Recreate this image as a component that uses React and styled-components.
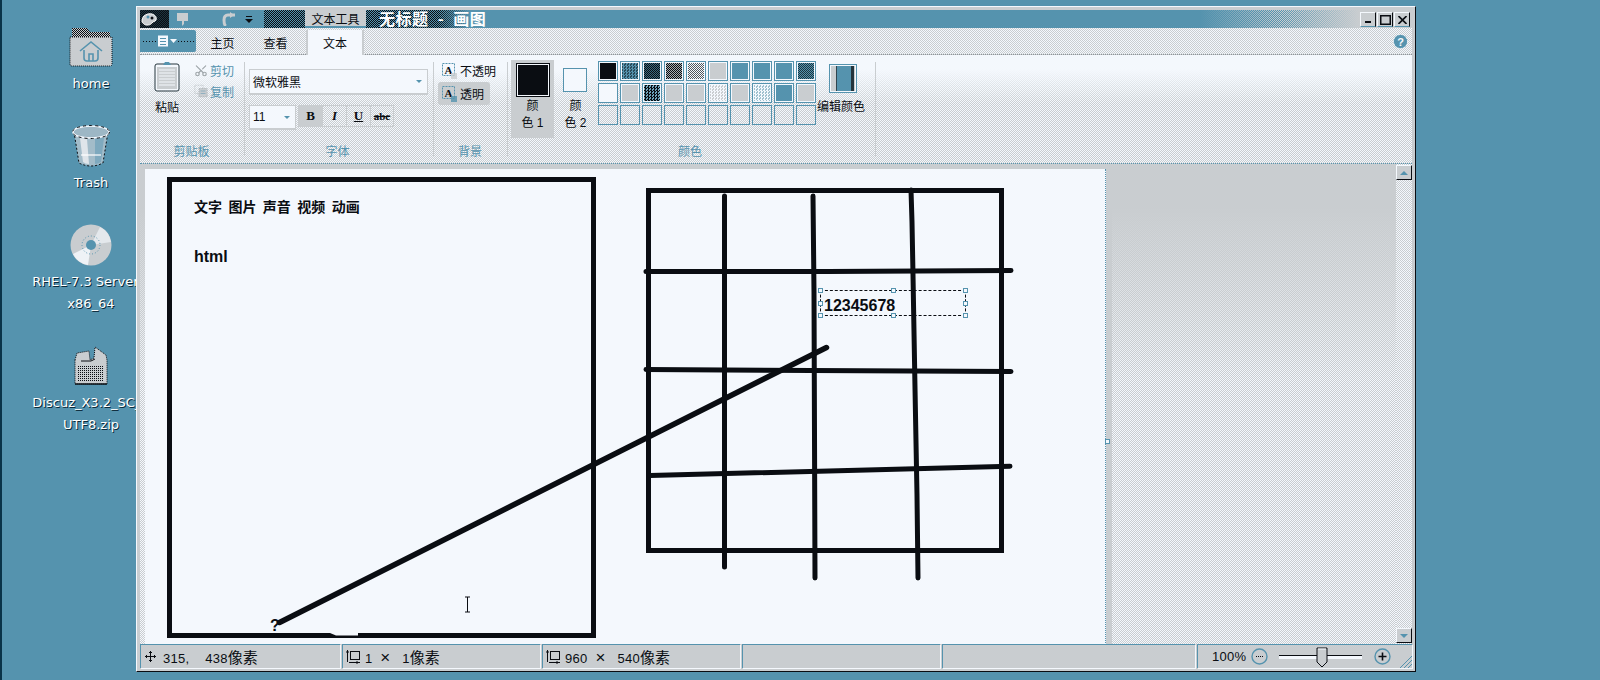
import React from "react";
import styled, { createGlobalStyle } from "styled-components";
import { Scissors } from "lucide-react";

const BLUE = "#5593ae";
const GRAY = "#c9cdd0";
const PAPER = "#f4f8fd";
const INK = "#0a0d12";

const checker = (a, b, size = 2) =>
  `repeating-conic-gradient(${a} 0 25%, ${b} 0 50%) 0 0 / ${size}px ${size}px`;

const GlobalStyle = createGlobalStyle`
  html, body { margin: 0; padding: 0; background: ${BLUE}; overflow: hidden; }
  body { font-family: "Liberation Sans", "Noto Sans CJK SC", sans-serif; font-size: 12px; color: ${INK}; }
  * { box-sizing: border-box; }
`;

const Screen = styled.div`
  display: flex;
  align-items: flex-start;
  height: 680px;
  border-left: 2px solid #0a3348;
  background: ${BLUE};
`;

/* ---------- desktop ---------- */

const Desktop = styled.div`
  flex: none;
  width: 134px;
  padding: 25px 0 0 32px;
  display: flex;
  flex-direction: column;
  gap: 29px;
`;

const DesktopItem = styled.div`
  width: 114px;
  display: flex;
  flex-direction: column;
  align-items: center;
`;

const DesktopIcon = styled.div`
  height: 44px;
  margin-bottom: 4px;
  display: flex;
  align-items: center;
  justify-content: center;
`;

const DesktopLabel = styled.div`
  font-family: "DejaVu Sans", sans-serif;
  font-size: 13px;
  line-height: 22px;
  color: #fff;
  white-space: pre;
  text-shadow: 1px 1px 0 #0a2a3a;
`;

const FolderIcon = () => (
  <svg width="44" height="40" viewBox="0 0 44 40">
    <defs>
      <pattern id="tabDots" width="2" height="2" patternUnits="userSpaceOnUse">
        <rect width="2" height="2" fill={GRAY} />
        <rect width="1" height="1" fill={INK} />
        <rect x="1" y="1" width="1" height="1" fill={INK} />
      </pattern>
    </defs>
    <path d="M3 1h15l3 4h20v6H3z" fill="url(#tabDots)" />
    <path d="M1 10h42v27q0 2-2 2H3q-2 0-2-2z" fill={GRAY} stroke={INK} strokeWidth="1" strokeDasharray="1 1" />
    <path d="M11 24 L22 15 L33 24 M15 23v8q0 3 3 3h8q3 0 3-3v-8 M20 34v-7h4v7" fill="none" stroke={BLUE} strokeWidth="1.6" />
  </svg>
);

const TrashIcon = () => (
  <svg width="40" height="44" viewBox="0 0 40 44">
    <path d="M3 8 L8 39 Q20 45 32 39 L37 8z" fill="#a3bcc9" stroke={INK} strokeWidth="1" strokeDasharray="2 2" />
    <path d="M9 14 L12 38 Q14 40 18 40 L16 15z" fill="#dfe5ea" />
    <path d="M24 14h9l-3 24q-3 2-6 2z" fill="#7ea9be" />
    <ellipse cx="20" cy="8" rx="18" ry="6" fill="#9db7c5" stroke="#f4f8fd" strokeWidth="1.6" />
    <ellipse cx="20" cy="8" rx="18.5" ry="6.5" fill="none" stroke={INK} strokeWidth="1" strokeDasharray="3 3" />
    <rect x="10" y="30" width="20" height="2" fill="#fff" opacity="0.6" />
  </svg>
);

const DiscIcon = () => (
  <svg width="42" height="42" viewBox="0 0 42 42">
    <circle cx="21" cy="21" r="20.5" fill={GRAY} />
    <path d="M21 21 L3 30 A20 20 0 0 0 18 41z" fill="#eef2f6" />
    <path d="M21 21 L30 3 A20 20 0 0 1 41 18z" fill="#e4e8ec" />
    <circle cx="21" cy="21" r="9" fill="none" stroke={BLUE} strokeWidth="1" strokeDasharray="1 2" />
    <circle cx="21" cy="21" r="5" fill={BLUE} />
  </svg>
);

const ZipIcon = () => (
  <svg width="34" height="40" viewBox="0 0 34 40">
    <defs>
      <pattern id="zipDots" width="2" height="2" patternUnits="userSpaceOnUse">
        <rect width="2" height="2" fill={GRAY} />
        <rect width="1" height="1" fill={INK} />
      </pattern>
    </defs>
    <path d="M1 14 L3 7 L15 5 L16 14 L20 12 L21 1 L32 9 L33 14 V38 H1z" fill={GRAY} stroke={INK} strokeWidth="1" strokeDasharray="1 1" />
    <path d="M1 38 H33" stroke={INK} strokeWidth="1.4" />
    <rect x="4" y="19" width="26" height="17" fill="url(#zipDots)" />
    <path d="M7 15 h10 l4 -2" stroke={INK} fill="none" />
  </svg>
);

/* ---------- window frame ---------- */

const Window = styled.div`
  position: relative;
  z-index: 1;
  flex: none;
  width: 1280px;
  margin-top: 6px;
  padding: 3px;
  background: ${GRAY};
  border-top: 1px solid ${PAPER};
  border-left: 1px solid ${PAPER};
  border-right: 1px solid ${INK};
  border-bottom: 1px solid ${INK};
  display: flex;
  flex-direction: column;
`;

const TitleBar = styled.div`
  height: 18px;
  display: flex;
  align-items: stretch;
  background: ${BLUE};
`;

const AppIcon = styled.div`
  width: 29px;
  display: flex;
  align-items: center;
  justify-content: flex-start;
  background: ${checker(INK, "#1d3540")};
`;

const QuickAccess = styled.div`
  width: 95px;
  display: flex;
  align-items: center;
  padding-left: 8px;
  gap: 34px;
  background: ${BLUE};
  border-radius: 0 9px 9px 0;
`;

const TitleDither = styled.div`
  width: ${(p) => p.$w}px;
  background: ${checker(INK, BLUE)};
`;

const ContextTab = styled.div`
  width: 61px;
  display: flex;
  align-items: center;
  justify-content: center;
  font-size: 12px;
  background: ${GRAY};
  border-bottom: 2px solid ${BLUE};
`;

const WindowTitle = styled.div`
  width: 126px;
  font-family: "Noto Sans CJK SC", sans-serif;
  font-size: 16px;
  font-weight: 700;
  line-height: 17px;
  letter-spacing: 0.5px;
  word-spacing: 5px;
  color: #fff;
  white-space: nowrap;
  background: linear-gradient(90deg, rgba(85, 147, 174, 0) 0 60px, ${BLUE} 90px), ${checker(INK, BLUE)};
`;

const TitleFade = styled.div`
  flex: 1;
  margin-left: 695px;
  background: linear-gradient(90deg, ${BLUE}, rgba(85, 147, 174, 0) 50%),
    linear-gradient(90deg, rgba(201, 205, 208, 0) 50%, ${GRAY}), ${checker(BLUE, GRAY)};
`;

const WindowButtons = styled.div`
  width: 52px;
  display: flex;
  align-items: flex-start;
  gap: 1px;
  padding-top: 2px;
  background: ${GRAY};
`;

const WindowButton = styled.div`
  width: 16px;
  height: 15px;
  display: flex;
  align-items: center;
  justify-content: center;
  background: ${GRAY};
  border-top: 1px solid ${PAPER};
  border-left: 1px solid ${PAPER};
  border-right: 1px solid ${INK};
  border-bottom: 1px solid ${BLUE};
`;

const TabRow = styled.div`
  height: 27px;
  padding-top: 2px;
  display: flex;
  align-items: flex-start;
  background: ${checker(PAPER, GRAY)};
  border-bottom: 1px dotted #8d9499;
`;

const FileButton = styled.div`
  width: 56px;
  height: 22px;
  display: flex;
  align-items: center;
  justify-content: center;
  background: ${BLUE};
  border-radius: 0 2px 2px 0;
`;

const Tab = styled.div`
  width: ${(p) => (p.$active ? 54 : 53)}px;
  height: ${(p) => (p.$active ? 25 : 24)}px;
  margin-left: ${(p) => (p.$active ? 6 : 0)}px;
  display: flex;
  align-items: center;
  justify-content: center;
  font-size: 12px;
  background: ${(p) => (p.$active ? PAPER : "transparent")};
  box-shadow: ${(p) => (p.$active ? `-2px 0 0 ${GRAY}, 2px 0 0 ${GRAY}` : "none")};
`;

const HelpSlot = styled.div`
  margin-left: auto;
  margin-right: 4px;
  padding-top: 4px;
  display: flex;
`;

/* ---------- ribbon ---------- */

const Ribbon = styled.div`
  height: 108px;
  display: flex;
  background: linear-gradient(${PAPER} 0 14px, rgba(244, 248, 253, 0) 48px), ${checker(PAPER, GRAY)};
`;

const Group = styled.div`
  flex: none;
  width: ${(p) => p.$w}px;
  display: grid;
  grid-template-rows: 1fr 21px;
  position: relative;
  padding: 6px 0 0 ${(p) => p.$pad}px;
  &::after {
    content: "";
    position: absolute;
    right: 0;
    top: 7px;
    bottom: 7px;
    width: 1px;
    background: ${GRAY};
  }
`;

const GroupBody = styled.div`
  display: flex;
  align-items: flex-start;
  min-height: 0;
`;

const GroupLabel = styled.div`
  margin-left: ${(p) => -p.$pad}px;
  text-align: center;
  font-size: 12px;
  line-height: 20px;
  color: ${BLUE};
`;

const PasteButton = styled.div`
  width: 30px;
  display: flex;
  flex-direction: column;
  align-items: center;
  font-size: 12px;
  line-height: 14px;
  gap: 9px;
`;

const ClipColumn = styled.div`
  margin: -1px 0 0 12px;
  display: flex;
  flex-direction: column;
  gap: 1px;
`;

const ClipRow = styled.div`
  height: 20px;
  display: flex;
  align-items: center;
  gap: 2px;
  color: ${BLUE};
  font-size: 12px;
`;

const ClipIconSlot = styled.span`
  width: 14px;
  display: flex;
  justify-content: center;
`;

const FontColumn = styled.div`
  display: flex;
  flex-direction: column;
  gap: 10px;
  padding-top: 8px;
`;

const Combo = styled.div`
  width: ${(p) => p.$w}px;
  height: ${(p) => p.$h}px;
  padding: 0 5px 0 3px;
  display: flex;
  align-items: center;
  justify-content: space-between;
  background: ${PAPER};
  border: 1px solid ${GRAY};
  border-bottom-width: 2px;
  font-size: 12px;
`;

const Caret = styled.span`
  width: 0;
  height: 0;
  border-left: 3px solid transparent;
  border-right: 3px solid transparent;
  border-top: 3px solid ${BLUE};
`;

const FormatRow = styled.div`
  display: flex;
  align-items: flex-start;
  gap: 2px;
`;

const FormatGroup = styled.div`
  display: flex;
  border: 1px solid ${GRAY};
`;

const FormatButton = styled.div`
  width: ${(p) => p.$w || 24}px;
  height: 20px;
  display: flex;
  align-items: center;
  justify-content: center;
  font-family: "Liberation Serif", serif;
  font-size: ${(p) => p.$size || 13}px;
  font-weight: 700;
  font-style: ${(p) => (p.$italic ? "italic" : "normal")};
  text-decoration: ${(p) => p.$deco || "none"};
  background: ${(p) => (p.$active ? GRAY : "transparent")};
  border-right: 1px solid ${GRAY};
  &:last-child { border-right: none; }
`;

const BgColumn = styled.div`
  margin-top: -2px;
  display: flex;
  flex-direction: column;
`;

const BgOption = styled.div`
  width: ${(p) => (p.$active ? 52 : 62)}px;
  height: 23px;
  padding-left: 4px;
  display: flex;
  align-items: center;
  gap: 3px;
  font-size: 12px;
  white-space: nowrap;
  border-radius: 3px;
  background: ${(p) => (p.$active ? GRAY : "transparent")};
`;

const ColorButton = styled.div`
  flex: none;
  width: 43px;
  height: 78px;
  margin-top: -1px;
  display: flex;
  flex-direction: column;
  align-items: center;
  font-size: 12px;
  line-height: 17px;
  background: ${(p) => (p.$active ? GRAY : "transparent")};
`;

const SwatchSlot = styled.div`
  height: 38px;
  padding: 1px 0 0;
  display: flex;
  align-items: center;
  justify-content: center;
`;

const MainSwatch = styled.div`
  width: ${(p) => p.$size}px;
  height: ${(p) => p.$size}px;
  margin-left: ${(p) => (p.$active ? 0 : -1)}px;
  background: ${(p) => p.$fill};
  border: 1px ${(p) => (p.$active ? `dotted ${INK}` : `solid ${BLUE}`)};
  outline: ${(p) => (p.$active ? `1px solid ${PAPER}` : "none")};
  outline-offset: -2px;
`;

const Palette = styled.div`
  flex: none;
  margin-left: 1px;
  display: grid;
  grid-template-columns: repeat(10, 20px);
  grid-auto-rows: 20px;
  gap: 2px;
`;

const PaletteCell = styled.div`
  border: 1px solid ${BLUE};
  padding: 1px;
  background: ${(p) => (p.$fill ? PAPER : "transparent")};
  &::before {
    content: "";
    display: block;
    width: 100%;
    height: 100%;
    background: ${(p) => p.$fill || "transparent"};
  }
`;

const EditColors = styled.div`
  flex: none;
  width: 54px;
  margin-left: -2px;
  padding-top: 3px;
  display: flex;
  flex-direction: column;
  align-items: center;
  gap: 7px;
  font-size: 12px;
  line-height: 14px;
  white-space: nowrap;
`;

const EditSwatch = styled.div`
  width: 28px;
  height: 29px;
  margin-left: 3px;
  border: 1px solid ${BLUE};
  outline: 1px solid ${PAPER};
  outline-offset: -2px;
  background: linear-gradient(90deg, ${GRAY} 0 6px, #30454f 6px 7px, ${BLUE} 7px 21px, #24343c 21px 24px, ${GRAY} 24px);
`;

/* ---------- work area ---------- */

const WorkArea = styled.div`
  height: 481px;
  display: flex;
  border-top: 1px dotted ${BLUE};
`;

const Viewport = styled.div`
  flex: 1;
  min-width: 0;
  overflow: hidden;
  padding: 5px 0 0 5px;
  background: linear-gradient(${GRAY} 0 42px, rgba(201, 205, 208, 0) 215px), ${checker(GRAY, PAPER)};
`;

const Canvas = styled.div`
  position: relative;
  width: 961px;
  height: 540px;
  background: ${PAPER};
  border-right: 1px dotted ${BLUE};
  box-shadow: 6px 0 0 ${GRAY};
`;

const Drawing = styled.svg`
  position: absolute;
  left: 0;
  top: 0;
`;

const CanvasText = styled.div`
  position: absolute;
  left: ${(p) => p.$x}px;
  top: ${(p) => p.$y}px;
  font-family: "Liberation Sans", "Noto Sans CJK SC", sans-serif;
  font-size: 16px;
  font-weight: 700;
  line-height: 18px;
  white-space: nowrap;
`;

const CjkLine = styled(CanvasText)`
  font-family: "Noto Sans CJK SC", sans-serif;
  font-size: 14px;
  word-spacing: 3.25px;
`;

const TextBox = styled.div`
  position: absolute;
  left: 675px;
  top: 121px;
  width: 146px;
  height: 26px;
  border: 1px dashed ${INK};
  padding: 5px 0 0 3px;
  font-family: "Liberation Sans", sans-serif;
  font-size: 16px;
  font-weight: 700;
  line-height: 20px;
`;

const Handle = styled.span`
  position: absolute;
  left: ${(p) => p.$x}px;
  top: ${(p) => p.$y}px;
  width: 5px;
  height: 5px;
  background: ${PAPER};
  border: 1px solid ${BLUE};
`;

const CanvasGrip = styled(Handle)`
  left: 960px;
  top: 270px;
`;

const Scrollbar = styled.div`
  flex: none;
  width: 16px;
  padding: 1px 0;
  display: flex;
  flex-direction: column;
  justify-content: space-between;
  background: ${checker(PAPER, GRAY)};
`;

const ScrollButton = styled.div`
  height: 15px;
  display: flex;
  align-items: center;
  justify-content: center;
  background: ${GRAY};
  border-top: 1px solid ${PAPER};
  border-left: 1px solid ${PAPER};
  border-right: 1px solid ${INK};
  border-bottom: 1px solid ${INK};
`;

const ArrowGlyph = styled.span`
  width: 0;
  height: 0;
  border-left: 4px solid transparent;
  border-right: 4px solid transparent;
  ${(p) => (p.$up ? `border-bottom: 4px solid ${BLUE};` : `border-top: 4px solid ${BLUE};`)}
`;

/* ---------- status bar ---------- */

const StatusBar = styled.div`
  height: 24px;
  display: grid;
  grid-template-columns: 200px 198px 198px 198px 253px 1fr;
  gap: 2px;
`;

const StatusCell = styled.div`
  position: relative;
  padding-left: ${(p) => p.$pad || 0}px;
  display: flex;
  align-items: center;
  gap: ${(p) => p.$gap || 0}px;
  font-family: "Liberation Sans", "Noto Sans CJK SC", sans-serif;
  font-size: 13px;
  letter-spacing: 0.3px;
  white-space: pre;
  background: ${GRAY};
  border-top: 1px solid ${BLUE};
  border-left: 1px solid ${BLUE};
  box-shadow: 1px 1px 0 ${PAPER};
`;

const Unit = styled.span`
  font-size: 15px;
  letter-spacing: 0;
`;

const Times = styled.span`
  font-size: 17px;
  line-height: 13px;
`;

const ZoomValue = styled.span`
  width: 39px;
`;

const Slider = styled.div`
  position: relative;
  width: 83px;
  height: 4px;
  margin: 0 12px 0 11px;
  border-top: 1px solid ${INK};
  background: ${PAPER};
`;

const SliderThumb = styled.svg`
  position: absolute;
  left: 37px;
  top: -9px;
`;

const ResizeGrip = styled.svg`
  position: absolute;
  right: 0;
  bottom: 0;
`;

/* ---------- small drawings ---------- */

const PaintGlyph = () => (
  <svg width="20" height="16" viewBox="0 0 20 16">
    <path d="M2 10c0-6 6-8 10-7 3 1 5 3 4 6-1 2-3 1-4 3-1 2-6 3-8 1-1-1-2-1-2-3z" fill={GRAY} stroke="#fff" />
    <circle cx="8" cy="6" r="1.5" fill={BLUE} />
    <circle cx="12" cy="7" r="1.5" fill={INK} />
  </svg>
);

const SaveGlyph = () => (
  <svg width="11" height="13" viewBox="0 0 11 13">
    <path d="M0 0h11v8H7v3L5 13V8H0z" fill={GRAY} />
  </svg>
);

const UndoGlyph = () => (
  <svg width="14" height="14" viewBox="0 0 14 14">
    <path d="M13 3H6Q2 3 2 8t2 6" fill="none" stroke={GRAY} strokeWidth="3" />
    <path d="M8 0v6l4-3z" fill={GRAY} />
  </svg>
);

const QuickMore = () => (
  <svg width="8" height="7" viewBox="0 0 8 7" style={{ marginLeft: -25 }}>
    <path d="M1 0h6v1H1z M0 3h8L4 7z" fill={INK} />
  </svg>
);

const FileGlyph = () => (
  <svg width="54" height="12" viewBox="0 0 54 12">
    <path d="M2 6.5h15M37 6.5h16" stroke={INK} strokeDasharray="1 2" />
    <rect x="17" y="0.5" width="10" height="11" fill={PAPER} />
    <path d="M19 3.5h6M19 6.5h6M19 9.5h6" stroke={BLUE} />
    <path d="M29 4h7l-3.5 4z" fill={PAPER} />
  </svg>
);

const ClipboardIcon = () => (
  <svg width="26" height="31" viewBox="0 0 26 31">
    <rect x="1" y="3" width="24" height="27" rx="2" fill={PAPER} stroke="#24343c" />
    <rect x="3" y="6" width="20" height="22" fill={GRAY} />
    <path d="M5 9h16M5 12h16M5 15h16M5 18h16M5 21h16M5 24h16" stroke={PAPER} />
    <path d="M9 4l2-3h4l2 3z" fill={BLUE} />
  </svg>
);

const CopyIcon = () => (
  <svg width="17" height="16" viewBox="0 0 17 16">
    <rect x="1" y="1" width="10" height="10" fill="none" stroke="#b3b9bd" strokeDasharray="1 1" />
    <rect x="6" y="5" width="10" height="10" fill={GRAY} stroke="#9fa6aa" strokeDasharray="1 1" />
    <path d="M8 8h6M8 11h6" stroke={BLUE} opacity="0.6" />
  </svg>
);

const TextBgIcon = ({ filled }) => (
  <svg width="15" height="16" viewBox="0 0 15 16">
    <rect x="0.5" y="0.5" width="12" height="12" fill="none" stroke={BLUE} strokeDasharray="2 1" />
    <text x="6.5" y="10.5" textAnchor="middle" fontFamily="Liberation Serif, serif" fontWeight="700" fontSize="11" fill={INK}>A</text>
    <rect x="9" y="10" width="6" height="6" fill={filled ? BLUE : GRAY} opacity="0.8" />
  </svg>
);

const MoveIcon = () => (
  <svg width="11" height="11" viewBox="0 0 11 11">
    <path d="M5.5 0v11M0 5.5h11M4 1.5h3M4 9.5h3M1.5 4v3M9.5 4v3" stroke={INK} fill="none" />
  </svg>
);

const SelectIcon = ({ size = 14 }) => (
  <svg width={size} height={size} viewBox="0 0 14 14">
    <rect x="4.5" y="1.5" width="9" height="8" fill="none" stroke={INK} />
    <path d="M1.5 0v12M3 12.5h11M0 2h3M11 11v3" stroke={INK} fill="none" />
  </svg>
);

const RoundButton = ({ plus }) => (
  <svg width="17" height="17" viewBox="0 0 17 17">
    <circle cx="8.5" cy="8.5" r="7.5" fill={GRAY} stroke={BLUE} strokeWidth="1.4" />
    <path d={plus ? "M4.5 8.5h8M8.5 4.5v8" : "M5 8.5h7"} stroke={INK} strokeWidth={plus ? 1.6 : 1} strokeDasharray={plus ? "none" : "1 1"} />
  </svg>
);

// the bottom row of the palette holds no colours yet
const PALETTE = [
  INK,
  checker(BLUE, "#2a4a58", 3),
  checker(INK, "#3a6a80", 2),
  checker(INK, "#a8adb0", 2),
  checker("#52585c", PAPER, 2),
  GRAY,
  BLUE,
  BLUE,
  BLUE,
  checker("#1d3540", BLUE, 2),
  PAPER,
  GRAY,
  checker(INK, "#6fa4bb", 3),
  GRAY,
  GRAY,
  checker(PAPER, GRAY, 3),
  GRAY,
  checker(PAPER, "#9fc0ce", 3),
  BLUE,
  GRAY,
  ...Array(10).fill(null),
];

const App = () => (
  <>
    <GlobalStyle />
    <Screen>
      <Desktop>
        <DesktopItem>
          <DesktopIcon><FolderIcon /></DesktopIcon>
          <DesktopLabel>home</DesktopLabel>
        </DesktopItem>
        <DesktopItem>
          <DesktopIcon><TrashIcon /></DesktopIcon>
          <DesktopLabel>Trash</DesktopLabel>
        </DesktopItem>
        <DesktopItem>
          <DesktopIcon><DiscIcon /></DesktopIcon>
          <DesktopLabel>{"RHEL-7.3 Server.  "}</DesktopLabel>
          <DesktopLabel>x86_64</DesktopLabel>
        </DesktopItem>
        <DesktopItem>
          <DesktopIcon><ZipIcon /></DesktopIcon>
          <DesktopLabel>{"Discuz_X3.2_SC_  "}</DesktopLabel>
          <DesktopLabel>UTF8.zip</DesktopLabel>
        </DesktopItem>
      </Desktop>

      <Window>
        <TitleBar>
          <AppIcon><PaintGlyph /></AppIcon>
          <QuickAccess>
            <SaveGlyph />
            <UndoGlyph />
            <QuickMore />
          </QuickAccess>
          <TitleDither $w={41} />
          <ContextTab>文本工具</ContextTab>
          <TitleDither $w={13} />
          <WindowTitle>无标题 - 画图</WindowTitle>
          <TitleFade />
          <WindowButtons>
            <WindowButton>
              <svg width="7" height="7" viewBox="0 0 7 7"><rect y="5" width="6" height="2" fill={INK} /></svg>
            </WindowButton>
            <WindowButton>
              <svg width="11" height="10" viewBox="0 0 11 10"><rect x="0.75" y="0.75" width="9.5" height="8.5" fill="none" stroke={INK} strokeWidth="1.5" /></svg>
            </WindowButton>
            <WindowButton>
              <svg width="9" height="8" viewBox="0 0 9 8"><path d="M0.5 0 8.5 8M8.5 0 0.5 8" stroke={INK} strokeWidth="1.6" /></svg>
            </WindowButton>
          </WindowButtons>
        </TitleBar>

        <TabRow>
          <FileButton><FileGlyph /></FileButton>
          <Tab>主页</Tab>
          <Tab>查看</Tab>
          <Tab $active>文本</Tab>
          <HelpSlot>
            <svg width="15" height="15" viewBox="0 0 15 15">
              <circle cx="7.5" cy="7.5" r="7" fill={BLUE} stroke={PAPER} strokeDasharray="2 1" />
              <text x="7.5" y="11.5" textAnchor="middle" fontFamily="Liberation Sans, sans-serif" fontWeight="700" fontSize="11" fill={PAPER}>?</text>
            </svg>
          </HelpSlot>
        </TabRow>

        <Ribbon>
          <Group $w={105} $pad={12}>
            <GroupBody>
              <PasteButton>
                <ClipboardIcon />
                粘贴
              </PasteButton>
              <ClipColumn>
                <ClipRow>
                  <ClipIconSlot><Scissors size={15} color="#9fa6aa" style={{ transform: "rotate(-90deg)" }} /></ClipIconSlot>
                  剪切
                </ClipRow>
                <ClipRow>
                  <ClipIconSlot><CopyIcon /></ClipIconSlot>
                  复制
                </ClipRow>
              </ClipColumn>
            </GroupBody>
            <GroupLabel $pad={14}>剪贴板</GroupLabel>
          </Group>

          <Group $w={189} $pad={4}>
            <GroupBody>
              <FontColumn>
                <Combo $w={179} $h={26}>微软雅黑<Caret /></Combo>
                <FormatRow>
                  <Combo $w={47} $h={25}>11<Caret /></Combo>
                  <FormatGroup>
                    <FormatButton $active>B</FormatButton>
                    <FormatButton $italic>I</FormatButton>
                    <FormatButton $deco="underline">U</FormatButton>
                    <FormatButton $w={22} $size={11} $deco="line-through">abc</FormatButton>
                  </FormatGroup>
                </FormatRow>
              </FontColumn>
            </GroupBody>
            <GroupLabel $pad={8}>字体</GroupLabel>
          </Group>

          <Group $w={74} $pad={4}>
            <GroupBody>
              <BgColumn>
                <BgOption><TextBgIcon />不透明</BgOption>
                <BgOption $active><TextBgIcon filled />透明</BgOption>
              </BgColumn>
            </GroupBody>
            <GroupLabel $pad={6}>背景</GroupLabel>
          </Group>

          <Group $w={368} $pad={3}>
            <GroupBody>
              <ColorButton $active>
                <SwatchSlot><MainSwatch $active $size={34} $fill={INK} /></SwatchSlot>
                <span>颜</span>
                <span>色 1</span>
              </ColorButton>
              <ColorButton>
                <SwatchSlot><MainSwatch $size={24} $fill={PAPER} /></SwatchSlot>
                <span>颜</span>
                <span>色 2</span>
              </ColorButton>
              <Palette>
                {PALETTE.map((fill, i) => (
                  <PaletteCell key={i} $fill={fill} />
                ))}
              </Palette>
              <EditColors>
                <EditSwatch />
                编辑颜色
              </EditColors>
            </GroupBody>
            <GroupLabel $pad={7}>颜色</GroupLabel>
          </Group>
        </Ribbon>

        <WorkArea>
          <Viewport>
            <Canvas>
              {/* page coordinates, so the strokes can be read straight off the picture */}
              <Drawing width="960" height="540" viewBox="145 169 960 540">
                <g fill="none" stroke={INK} strokeWidth="5">
                  <rect x="169.5" y="179.5" width="424" height="456" />
                  <rect x="648.5" y="190.5" width="353" height="360" />
                </g>
                <path d="M330 633h28v2.5h-22z" fill={PAPER} />
                <g fill="none" stroke={INK} strokeWidth="5" strokeLinecap="round">
                  <path d="M724.5 196V567" />
                  <path d="M813 196 814 292 815 578" />
                  <path d="M911 190 912 222 913 275 914 332 915 388 916 442 917 495 918 578" />
                  <path d="M646 271.5 H828 L1011 270.5" />
                  <path d="M646 369.5 L1011 371.5" />
                  <path d="M650 475.5 L1010 466.3" />
                  <path d="M279.5 622.5 L826.5 347.5" strokeWidth="5.5" />
                </g>
                <path d="M465 597h5M467.5 597v15M465 612h5" stroke={INK} fill="none" />
              </Drawing>
              <CjkLine $x={49} $y={28}>文字 图片 声音 视频 动画</CjkLine>
              <CanvasText $x={49} $y={79}>html</CanvasText>
              <CanvasText $x={125} $y={448}>?</CanvasText>
              <TextBox>
                12345678
                <Handle $x={-3} $y={-3} />
                <Handle $x={70} $y={-3} />
                <Handle $x={142} $y={-3} />
                <Handle $x={-3} $y={10} />
                <Handle $x={142} $y={10} />
                <Handle $x={-3} $y={22} />
                <Handle $x={70} $y={22} />
                <Handle $x={142} $y={22} />
              </TextBox>
              <CanvasGrip />
            </Canvas>
          </Viewport>
          <Scrollbar>
            <ScrollButton><ArrowGlyph $up /></ScrollButton>
            <ScrollButton><ArrowGlyph /></ScrollButton>
          </Scrollbar>
        </WorkArea>

        <StatusBar>
          <StatusCell $pad={4} $gap={7}><MoveIcon /><span>{"315,    438"}<Unit>像素</Unit></span></StatusCell>
          <StatusCell $pad={3} $gap={5}><SelectIcon /><span>{"1  "}<Times>×</Times>{"   1"}<Unit>像素</Unit></span></StatusCell>
          <StatusCell $pad={3} $gap={5}><SelectIcon /><span>{"960  "}<Times>×</Times>{"   540"}<Unit>像素</Unit></span></StatusCell>
          <StatusCell />
          <StatusCell />
          <StatusCell $pad={14}>
            <ZoomValue>100%</ZoomValue>
            <RoundButton />
            <Slider>
              <SliderThumb width="12" height="21" viewBox="0 0 12 21">
                <path d="M1 1h10v14l-5 5-5-5z" fill={GRAY} stroke={INK} strokeWidth="1" />
                <path d="M2 2h8" stroke={PAPER} />
              </SliderThumb>
            </Slider>
            <RoundButton plus />
            <ResizeGrip width="12" height="12" viewBox="0 0 12 12">
              <path d="M0 12 12 0M4 12l8-8M8 12l4-4" stroke={BLUE} fill="none" />
            </ResizeGrip>
          </StatusCell>
        </StatusBar>
      </Window>
    </Screen>
  </>
);

export default App;
